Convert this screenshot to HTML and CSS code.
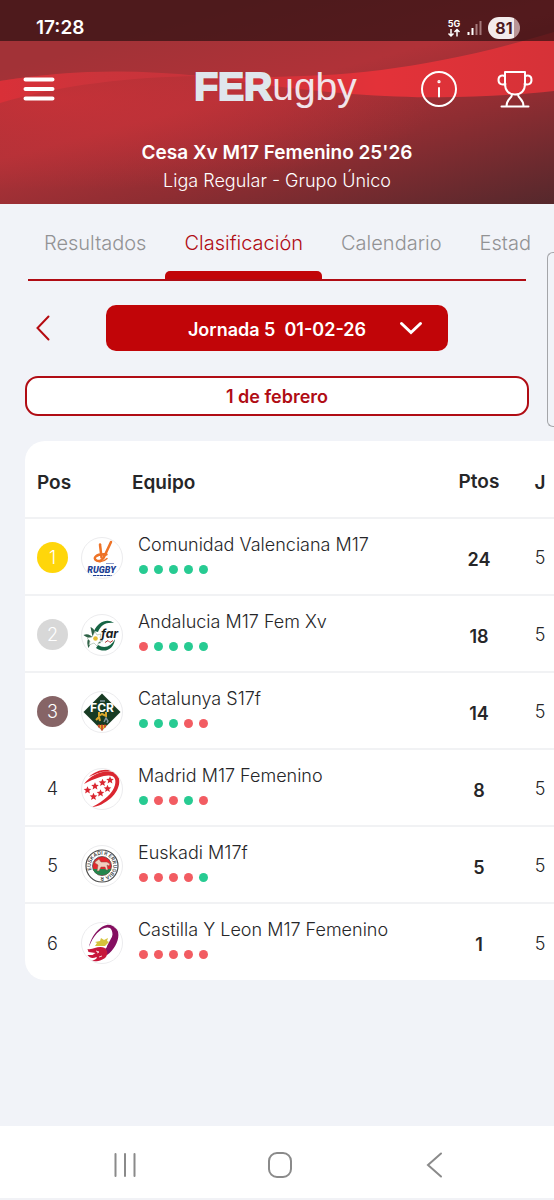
FILE: index.html
```html
<!DOCTYPE html>
<html lang="es">
<head>
    <meta charset="UTF-8">
    <meta name="viewport" content="width=device-width, initial-scale=1.0">
    <title>FERugby - Clasificación</title>
    <link rel="stylesheet" href="styles.css">
</head>
<body>
    <header class="header">
        <svg class="header-waves" viewBox="0 0 554 204" preserveAspectRatio="none" aria-hidden="true">
            <defs>
                <linearGradient id="waveLeft" x1="0" y1="0" x2="1" y2="0">
                    <stop offset="0" stop-color="#d93038"/>
                    <stop offset="0.5" stop-color="#cb343b"/>
                    <stop offset="1" stop-color="#c8323a"/>
                </linearGradient>
                <radialGradient id="waveGlow" cx="0.1" cy="0.2" r="0.7">
                    <stop offset="0" stop-color="#cf3138"/>
                    <stop offset="1" stop-color="#cf3138" stop-opacity="0"/>
                </radialGradient>
                <linearGradient id="waveRight" x1="0" y1="0" x2="1" y2="0">
                    <stop offset="0" stop-color="#c83239"/>
                    <stop offset="0.5" stop-color="#e33239"/>
                    <stop offset="1" stop-color="#d63238"/>
                </linearGradient>
            </defs>
            <path d="M0 81 C70 70 150 68 277 84 C360 100 470 101 554 91 L554 204 L0 204 Z" fill="url(#waveGlow)" opacity="0.7"/>
            <path d="M0 81 C70 70 130 69 200 76 C130 77 60 85 0 103 Z" fill="url(#waveLeft)"/>
            <path d="M200 76 C330 80 420 72 554 32 L554 91 C440 103 350 98 200 76 Z" fill="url(#waveRight)"/>
        </svg>

        <div class="status-bar">
            <span class="status-time">17:28</span>
            <div class="status-icons">
                <svg width="14" height="20" viewBox="0 0 14 20" aria-hidden="true">
                    <text class="net-label" x="7" y="9" text-anchor="middle">5G</text>
                    <g fill="none" stroke="#fff" stroke-width="1.500">
                        <path d="M4 11v7M1.500 15.500L4 18l2.500-2.500"/>
                        <path d="M10 18.500v-7M7.500 14L10 11.500l2.500 2.500"/>
                    </g>
                </svg>
                <svg width="15" height="16" viewBox="0 0 15 16" aria-hidden="true">
                    <path d="M1.500 12v3M5.500 8v7" stroke="#fff" stroke-width="2"/>
                    <path d="M9.500 4v11M13.500 1v14" stroke="#a5797b" stroke-width="2"/>
                </svg>
                <span class="battery">81</span>
            </div>
        </div>

        <div class="top-bar">
            <button class="icon-btn menu-btn" aria-label="Menú">
                <svg width="32" height="26" viewBox="0 0 32 26" stroke="#fff" stroke-width="4" stroke-linecap="round">
                    <path d="M2.500 3.500h27M2.500 13h27M2.500 22.500h27"/>
                </svg>
            </button>
            <h1 class="logo"><b>FER</b>ugby</h1>
            <button class="icon-btn info-btn" aria-label="Información">
                <svg width="38" height="38" viewBox="0 0 38 38" fill="none" stroke="#fff" stroke-width="2" stroke-linecap="round">
                    <circle cx="19" cy="19" r="17"/>
                    <path d="M19 18v8.500"/>
                    <circle cx="19" cy="11.700" r="0.600"/>
                </svg>
            </button>
            <button class="icon-btn cup-btn" aria-label="Competiciones">
                <svg width="38" height="38" viewBox="0 0 38 38" fill="none" stroke="#fff" stroke-width="2" stroke-linecap="round" stroke-linejoin="round">
                    <path d="M9 2h20v12c0 6.500-4 10.500-10 10.500S9 20.500 9 14z"/>
                    <path d="M9 6.500C7 5 2.500 5 2.500 10c0 4.500 4 5 7 4M29 6.500c2-1.500 6.500-1.500 6.500 3.500 0 4.500-4 5-7 4"/>
                    <path d="M16 24.500c0 4-5.500 4-5.500 12M22 24.500c0 4 5.500 4 5.500 12M5.500 36.500h27"/>
                </svg>
            </button>
        </div>

        <div class="competition">
            <h2>Cesa Xv M17 Femenino 25'26</h2>
            <p>Liga Regular - Grupo Único</p>
        </div>
    </header>

    <main class="content">
        <nav class="tabs">
            <a class="tab" href="#resultados">Resultados</a>
            <a class="tab active" href="#clasificacion">Clasificación</a>
            <a class="tab" href="#calendario">Calendario</a>
            <a class="tab" href="#estad">Estad</a>
        </nav>

        <div class="round-picker">
            <button class="prev-btn" aria-label="Jornada anterior">
                <svg width="14" height="26" viewBox="0 0 14 26" fill="none" stroke="#b50a10" stroke-width="2" stroke-linecap="round">
                    <path d="M12.500 1.500L1.500 13l11 11.500"/>
                </svg>
            </button>
            <div class="select-wrap">
                <select class="round-select" aria-label="Jornada">
                    <option>Jornada 5 &nbsp;01-02-26</option>
                </select>
                <svg class="select-arrow" width="24" height="14" viewBox="0 0 24 14" fill="none" stroke="#fff" stroke-width="3" stroke-linecap="round">
                    <path d="M2.500 2.500L12 11.500l9.500-9"/>
                </svg>
            </div>
        </div>

        <div class="date-box">1 de febrero</div>

        <div class="card">
            <table class="standings">
                <thead>
                    <tr>
                        <th class="col-pos">Pos</th>
                        <th class="col-team" colspan="2">Equipo</th>
                        <th class="col-pts">Ptos</th>
                        <th class="col-played">J</th>
                    </tr>
                </thead>
                <tbody>
                    <tr>
                        <td class="col-pos"><span class="pos gold">1</span></td>
                        <td class="col-crest">
                            <svg class="crest" viewBox="1 1 40 40" aria-hidden="true">
                                <g fill="none" stroke="#ee7327" stroke-linecap="round">
                                    <path d="M30 5L23.500 19c-1.500 4-5 6-8 4.500-4-2-1-7 10-6" stroke-width="2.500"/>
                                    <path d="M19 7.500l1.500 13" stroke-width="2.500"/>
                                    <path d="M14 22.500c3 3 8 3 12-1" stroke-width="1.500"/>
                                </g>
                                <text class="crest-rugby" x="20.500" y="36" text-anchor="middle">RUGBY</text>
                                <path d="M12 38.500h19" stroke="#1d3f94" stroke-width="1.200" stroke-dasharray="3 0.500"/>
                                <path d="M25 26.500h8" stroke="#8d9cc8" stroke-width="1"/>
                            </svg>
                        </td>
                        <td class="col-name">
                            <div class="team-name">Comunidad Valenciana M17</div>
                            <div class="form"><i class="win"></i><i class="win"></i><i class="win"></i><i class="win"></i><i class="win"></i></div>
                        </td>
                        <td class="col-pts">24</td>
                        <td class="col-played">5</td>
                    </tr>
                    <tr>
                        <td class="col-pos"><span class="pos silver">2</span></td>
                        <td class="col-crest">
                            <svg class="crest" viewBox="1 1 40 40" aria-hidden="true">
                                <path d="M13 17C17 8 26 4 33 9c-8-1-13 2-16 9zM17 31c6 4 13 2 17-6-1 10-10 15-19 9z" fill="#176545"/>
                                <path d="M2.500 21c4-2 7 0 9 2l-2-10c4 2 6 6 5.500 11l5 5c-4 1-7 0-9-2l-3.500 7c-2-5-1-8 0-10-2-1-4-2-5-3z" fill="#2f6247"/>
                                <path d="M14 17.500l2 3.500 4-1-1 4 3 3-4 1-2 4-3-3-5 2 1-4-3-3 5-1z" fill="#fff" stroke="#9ab3a0" stroke-width="0.600"/>
                                <circle cx="14.500" cy="24.500" r="2.300" fill="#e5bd32"/>
                                <text class="crest-far" x="20" y="24">far</text>
                                <path d="M24 28.500l3-2 2 2 3-2" fill="none" stroke="#b73a39" stroke-width="1"/>
                            </svg>
                        </td>
                        <td class="col-name">
                            <div class="team-name">Andalucia M17 Fem Xv</div>
                            <div class="form"><i class="loss"></i><i class="win"></i><i class="win"></i><i class="win"></i><i class="win"></i></div>
                        </td>
                        <td class="col-pts">18</td>
                        <td class="col-played">5</td>
                    </tr>
                    <tr>
                        <td class="col-pos"><span class="pos bronze">3</span></td>
                        <td class="col-crest">
                            <svg class="crest" viewBox="1 1 40 40" aria-hidden="true">
                                <path d="M21 2.500L39.500 21 21 39.500 2.500 21z" fill="#173b23"/>
                                <path d="M16 34h10l-5 5.500z" fill="#e9b52f"/>
                                <path d="M18 33.500v3M21 33.500v6M24 33.500v3" stroke="#c6352c" stroke-width="1.500"/>
                                <path d="M18 21v4l3-2 4 2v-4M15 29l3-3 1 4" fill="none" stroke="#d9a72b" stroke-width="2"/>
                                <path d="M23 31l2-4 2 3-1 2M19 10h5" fill="none" stroke="#8297a0" stroke-width="1.500"/>
                                <text class="crest-fcr" x="21" y="20.500" text-anchor="middle">FCR</text>
                            </svg>
                        </td>
                        <td class="col-name">
                            <div class="team-name">Catalunya S17f</div>
                            <div class="form"><i class="win"></i><i class="win"></i><i class="win"></i><i class="loss"></i><i class="loss"></i></div>
                        </td>
                        <td class="col-pts">14</td>
                        <td class="col-played">5</td>
                    </tr>
                    <tr>
                        <td class="col-pos"><span class="pos">4</span></td>
                        <td class="col-crest">
                            <svg class="crest" viewBox="1 1 40 40" aria-hidden="true">
                                <defs>
                                    <path id="star" d="M0-3.800L1.100-1.200 3.800-1.100 1.700.700 2.400 3.400 0 1.900-2.400 3.400-1.700.700-3.800-1.100-1.100-1.200z"/>
                                </defs>
                                <path d="M3 16C10 6 24 1 33 4c8 4 7 17-3 26-6 5-13 9-19 9 12-6 21-14 23-22C37 4 24 5 3 16z" fill="#da2630"/>
                                <path d="M8 9C14 3 24 0 31 3 22 3 16 5 8 9z" fill="#da2630"/>
                                <g fill="#da2630">
                                    <use href="#star" x="6.500" y="22"/>
                                    <use href="#star" x="14" y="18"/>
                                    <use href="#star" x="21.500" y="14.500"/>
                                    <use href="#star" x="29" y="12"/>
                                    <use href="#star" x="12.500" y="28.500"/>
                                    <use href="#star" x="19.500" y="25"/>
                                    <use href="#star" x="26.500" y="20.500"/>
                                </g>
                            </svg>
                        </td>
                        <td class="col-name">
                            <div class="team-name">Madrid M17 Femenino</div>
                            <div class="form"><i class="win"></i><i class="loss"></i><i class="loss"></i><i class="win"></i><i class="loss"></i></div>
                        </td>
                        <td class="col-pts">8</td>
                        <td class="col-played">5</td>
                    </tr>
                    <tr>
                        <td class="col-pos"><span class="pos">5</span></td>
                        <td class="col-crest">
                            <svg class="crest" viewBox="1 1 40 40" aria-hidden="true">
                                <defs>
                                    <path id="ring" d="M10.600 25A11.200 11.200 0 1 1 31.400 25A11.200 11.200 0 0 1 10.600 25"/>
                                </defs>
                                <circle cx="21" cy="21" r="16" fill="#fff" stroke="#4c4c4c" stroke-width="1.200"/>
                                <circle cx="21" cy="21" r="9.500" fill="#e5262c" stroke="#4c4c4c" stroke-width="0.800"/>
                                <path d="M12 24h18c-2 8-16 8-18 0z" fill="#23864c"/>
                                <path d="M14 17l4-3 2 3h6l3 2-1 2-2-1 1 5h-2l-1-3-4 0-2 4h-2l1-6-3-2z" fill="#f2cfc0" stroke="#8d5245" stroke-width="0.500"/>
                                <text class="crest-ring"><textPath href="#ring">EUSKADI R ERRUGBIA R</textPath></text>
                            </svg>
                        </td>
                        <td class="col-name">
                            <div class="team-name">Euskadi M17f</div>
                            <div class="form"><i class="loss"></i><i class="loss"></i><i class="loss"></i><i class="loss"></i><i class="win"></i></div>
                        </td>
                        <td class="col-pts">5</td>
                        <td class="col-played">5</td>
                    </tr>
                    <tr>
                        <td class="col-pos"><span class="pos">6</span></td>
                        <td class="col-crest">
                            <svg class="crest" viewBox="1 1 40 40" aria-hidden="true">
                                <path d="M8 25C11 11 23-1 33 4c9 6 3 22-7 29l-2-6c7-5 10-17 5-21C22 3 12 13 8 25z" fill="#850f60"/>
                                <path d="M26 24l7-13c2 8-3 17-8 21z" fill="#850f60"/>
                                <path d="M14 24l2-3-2-1 5-1 1-3 3 2 4-2-1 3 2 1-4 4z" fill="#d5c23b"/>
                                <path d="M6.500 27c5 1 8-2 13-2 6 0 8 5 6 9-2 4-9 6-15 5 4-1 6-3 5-4-4 2-7 1-9-2l5 0 3-2-7-1z" fill="#c7173b"/>
                                <path d="M15 29l3 1-2 1M18 35l3-1" fill="none" stroke="#fff" stroke-width="0.800"/>
                            </svg>
                        </td>
                        <td class="col-name">
                            <div class="team-name">Castilla Y Leon M17 Femenino</div>
                            <div class="form"><i class="loss"></i><i class="loss"></i><i class="loss"></i><i class="loss"></i><i class="loss"></i></div>
                        </td>
                        <td class="col-pts">1</td>
                        <td class="col-played">5</td>
                    </tr>
                </tbody>
            </table>
        </div>

        <div class="edge-handle"></div>
    </main>

    <footer class="nav-bar">
        <button class="nav-btn" aria-label="Recientes">
            <svg width="26" height="28" viewBox="0 0 26 28" stroke="#8a8a8a" stroke-width="2" stroke-linecap="round">
                <path d="M3.500 3v22M13 3v22M22.500 3v22"/>
            </svg>
        </button>
        <button class="nav-btn" aria-label="Inicio">
            <svg width="26" height="28" viewBox="0 0 26 28" fill="none" stroke="#8a8a8a" stroke-width="2">
                <rect x="2" y="2" width="22" height="24" rx="8"/>
            </svg>
        </button>
        <button class="nav-btn" aria-label="Atrás">
            <svg width="26" height="28" viewBox="0 0 26 28" fill="none" stroke="#8a8a8a" stroke-width="2" stroke-linecap="round">
                <path d="M19 2.500L6 14l13 11.500"/>
            </svg>
        </button>
    </footer>
</body>
</html>
```
FILE: styles.css
```css
* {
    margin: 0;
    padding: 0;
    box-sizing: border-box;
}

body {
    min-height: 100vh;
    display: flex;
    flex-direction: column;
    background: #f1f3f8;
    color: #262628;
    font-family: Inter, Roboto, sans-serif;
    font-size: 18px;
    overflow-x: hidden;
}

button {
    background: none;
    border: none;
    cursor: pointer;
}

svg {
    display: block;
}

/* cabecera */
.header {
    position: relative;
    color: #fff;
    background: linear-gradient(165deg, #a23237 20%, #b03238 45%, #8f2d32 68%, #55282c 100%);
}

.header-waves {
    position: absolute;
    inset: 0;
    width: 100%;
    height: 100%;
}

.status-bar {
    position: relative;
    height: 41px;
    padding: 14px 34px 0 36px;
    display: flex;
    align-items: center;
    justify-content: space-between;
    background: rgba(32, 12, 14, 0.64);
}

.status-time {
    font-size: 19px;
    font-weight: 600;
}

.status-icons {
    display: flex;
    align-items: center;
    gap: 6px;
}

.net-label {
    font-size: 9px;
    font-weight: 700;
    fill: #fff;
}

.battery {
    width: 32px;
    line-height: 22px;
    border-radius: 11px;
    background: linear-gradient(90deg, #f3ecec 80%, #b99596 80%);
    color: #4c1a1e;
    font-size: 16px;
    font-weight: 700;
    text-align: center;
}

.top-bar {
    position: relative;
    display: flex;
    align-items: center;
    height: 95px;
    padding: 0 20px 0 23px;
}

.logo {
    flex: 1;
    padding: 0 0 4px 76px;
    text-align: center;
    font-family: "Liberation Sans", Arial, sans-serif;
    font-size: 39px;
    font-weight: 400;
    line-height: 44px;
    color: #f1e4ea;
}

.logo b {
    color: #dfe6ec;
    -webkit-text-stroke: 2px #dfe6ec;
}

.cup-btn {
    margin-left: 38px;
}

.competition {
    position: relative;
    padding: 1px 0 11px;
    text-align: center;
}

.competition h2 {
    font-size: 19px;
    font-weight: 600;
    line-height: 32px;
}

.competition p {
    font-size: 18px;
    font-weight: 300;
    line-height: 24px;
}

/* contenido */
.content {
    position: relative;
    flex: 1;
    padding-left: 25px;
}

.tabs {
    position: relative;
    display: flex;
    margin-right: 24px;
    overflow: hidden;
}

.tabs::after {
    content: '';
    position: absolute;
    left: 3px;
    right: 4px;
    bottom: 0;
    height: 2px;
    background: #b00c14;
}

.tab {
    position: relative;
    padding: 2px 19px 0;
    color: #929294;
    font-size: 20px;
    font-weight: 300;
    line-height: 75px;
    text-decoration: none;
}

.tab:last-child {
    padding-right: 0;
}

.tab.active {
    color: #b00c14;
}

.tab.active::after {
    content: '';
    position: absolute;
    left: 0;
    right: 0;
    bottom: 0;
    height: 10px;
    border-radius: 5px 5px 0 0;
    background: #c10508;
}

.round-picker {
    display: flex;
    align-items: center;
    margin: 24px 106px 0 11px;
}

.select-wrap {
    position: relative;
    flex: 1;
    margin-left: 56px;
}

.round-select {
    display: block;
    width: 100%;
    height: 46px;
    padding-top: 2px;
    border: none;
    border-radius: 10px;
    background: #c10508;
    color: #fff;
    font-family: inherit;
    font-size: 18px;
    font-weight: 600;
    text-align: center;
    text-align-last: center;
    appearance: none;
}

.select-arrow {
    position: absolute;
    right: 25px;
    top: 16px;
    pointer-events: none;
}

.date-box {
    margin: 25px 25px 0 0;
    padding-top: 2px;
    border: 2px solid #b00c14;
    border-radius: 13px;
    background: #fff;
    color: #b00c14;
    font-weight: 600;
    line-height: 34px;
    text-align: center;
}

.card {
    margin-top: 25px;
    border-radius: 20px 0 0 20px;
    background: #fff;
    overflow: hidden;
}

.standings {
    width: 100%;
    border-collapse: collapse;
}

.standings th {
    height: 77px;
    padding-top: 6px;
    font-size: 19px;
    font-weight: 600;
    text-align: left;
}

.standings td {
    height: 77px;
    padding-top: 2px;
    border-top: 2px solid #f1f2f4;
    vertical-align: middle;
}

.standings .col-pos {
    width: 56px;
    padding-left: 12px;
}

.standings .col-team {
    padding-left: 51px;
}

.col-crest {
    width: 41px;
}

.standings .col-name {
    padding: 0 0 8px 15px;
}

.standings .col-pts {
    width: 94px;
    padding-top: 5px;
    text-align: center;
    font-weight: 600;
}

.standings .col-played {
    width: 28px;
    text-align: center;
}

td.col-played {
    font-weight: 300;
}

.pos {
    display: block;
    width: 31px;
    line-height: 31px;
    border-radius: 50%;
    font-weight: 300;
    text-align: center;
}

.pos.gold {
    background: #ffd60a;
    color: #fff;
}

.pos.silver {
    background: #d8d8d8;
    color: #fff;
}

.pos.bronze {
    background: #866466;
    color: #fff;
}

.crest {
    width: 42px;
    height: 42px;
    border: 1px solid #ececee;
    border-radius: 50%;
}

.crest-rugby {
    font-family: "DejaVu Sans Condensed", Roboto, sans-serif;
    font-family: Roboto, sans-serif;
    font-size: 9px;
    font-weight: 900;
    font-style: italic;
    fill: #1d3f94;
}

.crest-far {
    font-size: 12px;
    font-weight: 700;
    font-style: italic;
    fill: #17201d;
}

.crest-fcr {
    font-size: 12px;
    font-weight: 700;
    fill: #fff;
}

.crest-ring {
    font-size: 5px;
    font-weight: 600;
    fill: #3f3f3f;
}

.team-name {
    font-size: 18px;
    font-weight: 300;
    line-height: 26px;
    white-space: nowrap;
}

.form {
    display: flex;
    gap: 6px;
    padding: 7px 0 0 1px;
}

.form i {
    width: 9px;
    height: 9px;
    border-radius: 50%;
}

.win {
    background: #27cb92;
}

.loss {
    background: #f25c62;
}

/* panel lateral del sistema */
.edge-handle {
    position: absolute;
    top: 48px;
    right: 0;
    width: 7px;
    height: 175px;
    border: 1px solid #a4a5a9;
    border-right: none;
    border-radius: 6px 0 0 6px;
}

.nav-bar {
    display: flex;
    justify-content: center;
    align-items: center;
    gap: 129px;
    height: 74px;
    padding: 6px 0 0 5px;
    background: #fff;
    border-bottom: 2px solid #f1f2f6;
}
```
